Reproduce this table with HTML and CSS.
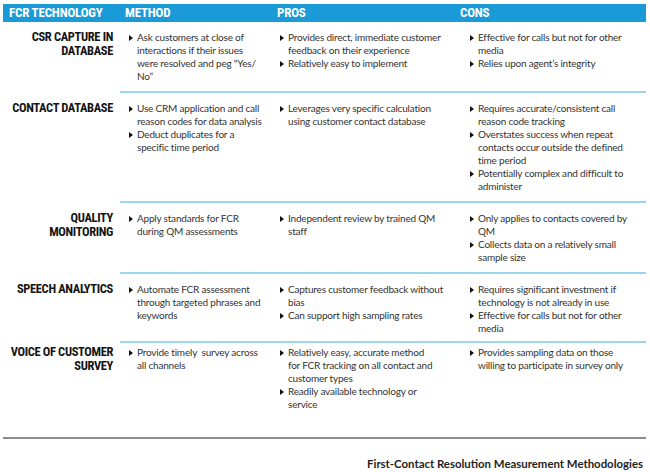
FILE: index.html
```html
<!DOCTYPE html>
<html>
<head>
<meta charset="utf-8">
<link rel="stylesheet" href="styles.css">
</head>
<body>
<div class="page">
  <div class="table">
    <div class="head">
      <div class="h h-label">FCR TECHNOLOGY</div>
      <div class="h h-method">METHOD</div>
      <div class="h h-pros">PROS</div>
      <div class="h h-cons">CONS</div>
    </div>

    <div class="row">
      <div class="label">CSR CAPTURE IN<br>DATABASE</div>
      <div class="cells">
        <ul class="col method">
          <li>Ask customers at close of<br>interactions if their issues<br>were resolved and peg “Yes/<br>No”</li>
        </ul>
        <ul class="col pros">
          <li>Provides direct, immediate customer<br>feedback on their experience</li>
          <li>Relatively easy to implement</li>
        </ul>
        <ul class="col cons">
          <li>Effective for calls but not for other<br>media</li>
          <li>Relies upon agent’s integrity</li>
        </ul>
      </div>
    </div>

    <div class="row">
      <div class="label">CONTACT DATABASE</div>
      <div class="cells">
        <ul class="col method">
          <li>Use CRM application and call<br>reason codes for data analysis</li>
          <li>Deduct duplicates for a<br>specific time period</li>
        </ul>
        <ul class="col pros">
          <li>Leverages very specific calculation<br>using customer contact database</li>
        </ul>
        <ul class="col cons">
          <li>Requires accurate/consistent call<br>reason code tracking</li>
          <li>Overstates success when repeat<br>contacts occur outside the defined<br>time period</li>
          <li>Potentially complex and difficult to<br>administer</li>
        </ul>
      </div>
    </div>

    <div class="row">
      <div class="label">QUALITY<br>MONITORING</div>
      <div class="cells">
        <ul class="col method">
          <li>Apply standards for FCR<br>during QM assessments</li>
        </ul>
        <ul class="col pros">
          <li>Independent review by trained QM<br>staff</li>
        </ul>
        <ul class="col cons">
          <li>Only applies to contacts covered by<br>QM</li>
          <li>Collects data on a relatively small<br>sample size</li>
        </ul>
      </div>
    </div>

    <div class="row speech">
      <div class="label">SPEECH ANALYTICS</div>
      <div class="cells">
        <ul class="col method">
          <li>Automate FCR assessment<br>through targeted phrases and<br>keywords</li>
        </ul>
        <ul class="col pros">
          <li>Captures customer feedback without<br>bias</li>
          <li>Can support high sampling rates</li>
        </ul>
        <ul class="col cons">
          <li>Requires significant investment if<br>technology is not already in use</li>
          <li>Effective for calls but not for other<br>media</li>
        </ul>
      </div>
    </div>

    <div class="row last">
      <div class="label">VOICE OF CUSTOMER<br>SURVEY</div>
      <div class="cells">
        <ul class="col method">
          <li>Provide timely&nbsp; survey across<br>all channels</li>
        </ul>
        <ul class="col pros">
          <li>Relatively easy, accurate method<br>for FCR tracking on all contact and<br>customer types</li>
          <li>Readily available technology or<br>service</li>
        </ul>
        <ul class="col cons">
          <li>Provides sampling data on those<br>willing to participate in survey only</li>
        </ul>
      </div>
    </div>
  </div>

  <div class="caption">First-Contact Resolution Measurement Methodologies</div>
</div>
</body>
</html>
```

FILE: styles.css
```css
* { box-sizing: border-box; }

html, body {
  margin: 0;
  padding: 0;
  background: #ffffff;
}

.page {
  width: 650px;
  height: 472px;
  padding: 4px 4px 0 3px;
  font-family: Lato, "Open Sans", sans-serif;
  color: #333333;
}

.table {
  width: 643px;
  border-bottom: 2px solid #8c8c8c;
}

.head {
  display: grid;
  grid-template-columns: 117px 153px 183px 190px;
  height: 18px;
  align-items: center;
  background: #1a9bd7;
}

.h,
.label {
  font-family: "Liberation Sans Narrow", "Roboto Condensed", Roboto, sans-serif;
  font-weight: 700;
  white-space: nowrap;
}

.h {
  color: #ffffff;
  font-size: 13px;
  letter-spacing: -0.2px;
  line-height: 18px;
}

.h-label { padding-left: 6px; }
.h-method { padding-left: 5px; }
.h-pros { padding-left: 4px; }
.h-cons { padding-left: 4px; }

.row {
  display: grid;
  grid-template-columns: 117px 526px;
}

.label {
  color: #141414;
  text-align: right;
  padding: 8px 7px 0 0;
  font-size: 12.5px;
  letter-spacing: -0.35px;
  line-height: 14px;
}

.cells {
  display: grid;
  grid-template-columns: 153px 183px 190px;
  padding: 9px 0 8px;
  border-bottom: 2px solid #9ad6ee;
}

.row.speech .cells {
  padding-bottom: 6px;
}

.row.last .label {
  padding-top: 2px;
}

.row.last .cells {
  border-bottom: none;
  padding-top: 3px;
  padding-bottom: 26px;
}

.col {
  list-style: none;
  margin: 0;
  font-size: 10px;
  line-height: 13px;
  letter-spacing: -0.2px;
  white-space: nowrap;
}

.col.method { padding-left: 9px; }
.col.pros { padding-left: 7px; }
.col.cons { padding-left: 14px; }

.col li {
  display: flex;
  align-items: flex-start;
}

.col li::before {
  content: "";
  flex: none;
  width: 0;
  height: 0;
  margin: 3.5px 4px 0 0;
  border-top: 3px solid transparent;
  border-bottom: 3px solid transparent;
  border-left: 4px solid #111111;
}

.caption {
  margin-top: 18px;
  padding-right: 3px;
  text-align: right;
  font-family: Lato, "Open Sans", sans-serif;
  font-weight: 700;
  font-size: 11.4px;
  line-height: 14px;
  color: #1e1e1e;
}
```
